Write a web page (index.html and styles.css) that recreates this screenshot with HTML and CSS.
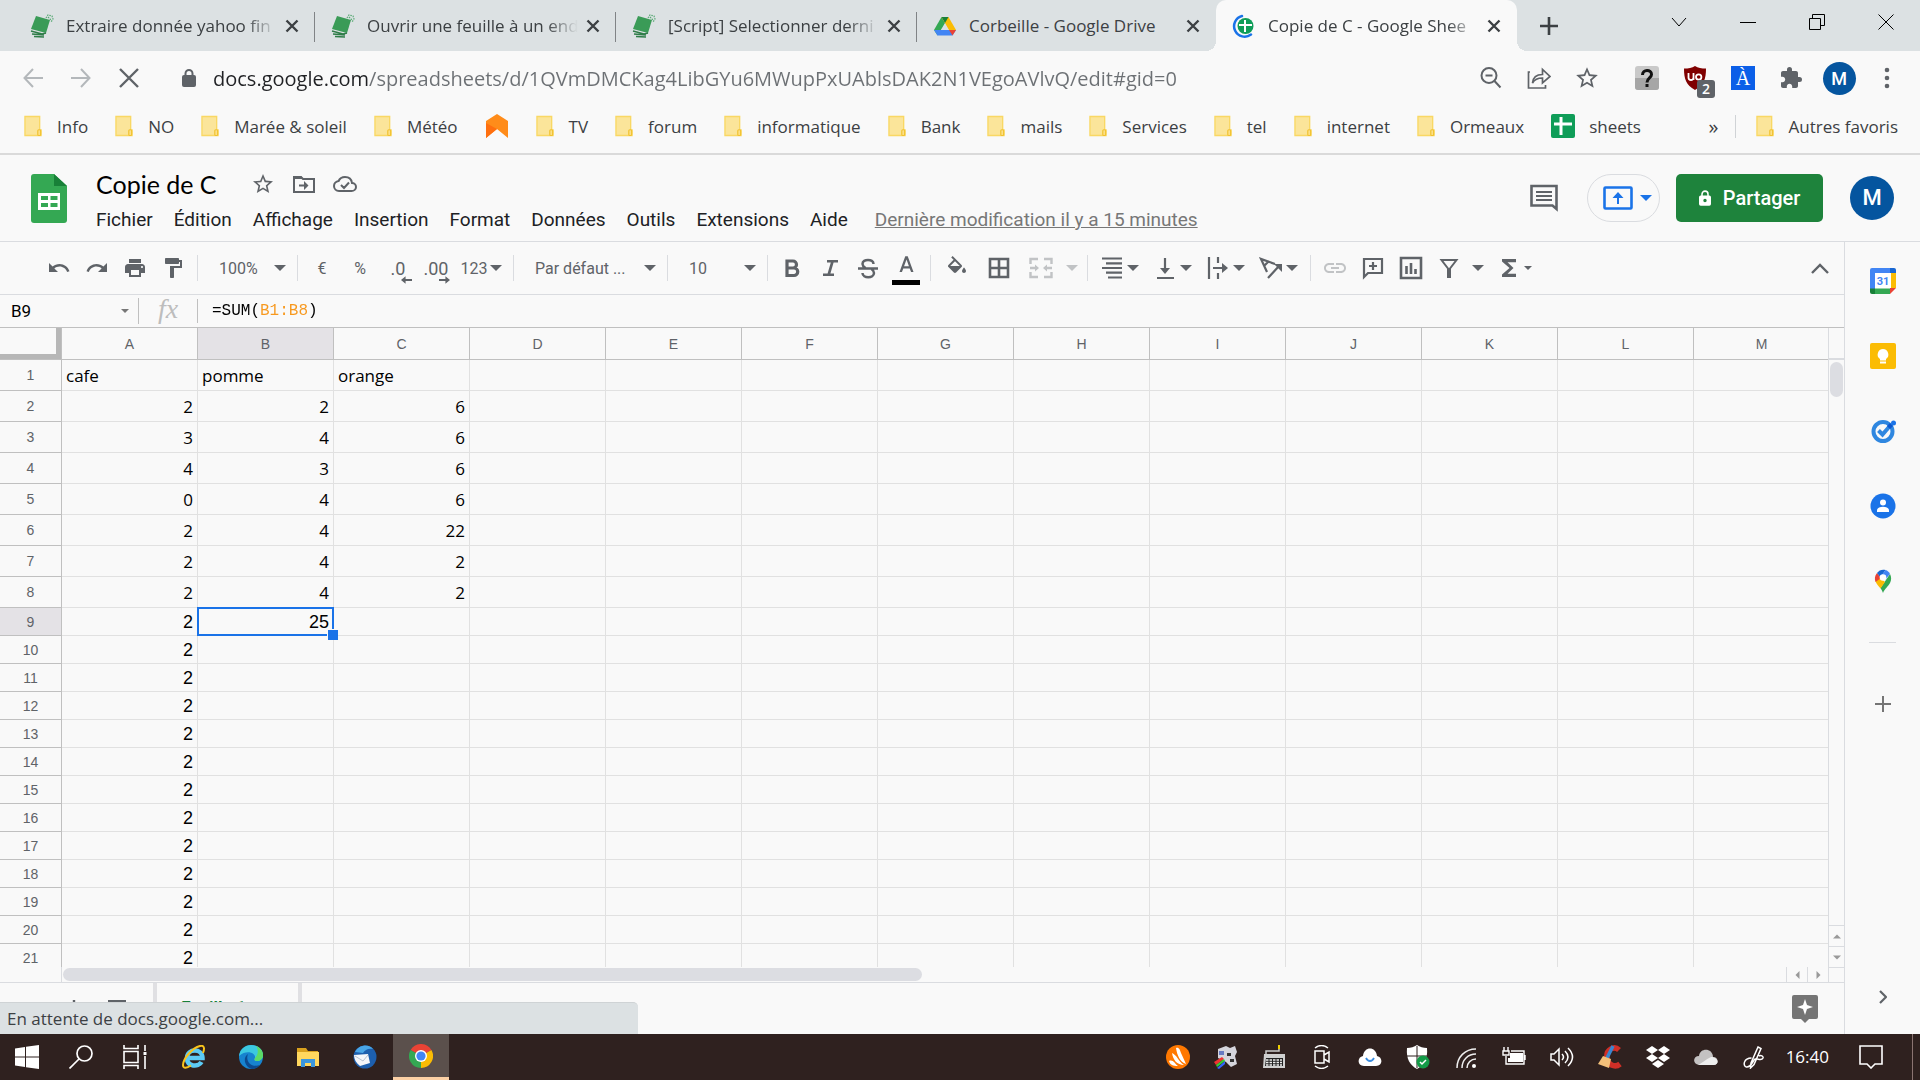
FILE: index.html
```html
<!DOCTYPE html>
<html lang="fr">
<head>
  <meta charset="UTF-8">
  <meta name="viewport" content="width=device-width, initial-scale=1.0">
  <title>Copie de C - Google Sheets</title>
  <link rel="stylesheet" href="styles.css">
</head>
<body>
  <!-- shared icons -->
  <svg class="defs" aria-hidden="true">
    <symbol id="i-book" viewBox="0 0 24 24">
      <path fill="#3a9b57" d="M6 2l14 4-4 13L1 15z"/>
      <path fill="none" stroke="#2f7d49" stroke-width="1.500" d="M1 17l11 3 4-1M2 20l12 1M4 22.500l10 .5"/>
      <path fill="none" stroke="#58a974" stroke-width="1.200" stroke-dasharray="1.500 1" d="M16 4l2-3 4 1 1 3-2 3M18 3l3 3"/>
    </symbol>
    <symbol id="i-close" viewBox="0 0 14 14"><path stroke="#3c4043" stroke-width="2.400" d="M1.500 1.500l11 11M12.500 1.500l-11 11"/></symbol>
    <symbol id="i-folder" viewBox="0 0 20 22">
      <path fill="#fbe59a" stroke="#f9d864" stroke-width="1.400" d="M1 1h15.500v14h1.500v6H1z"/>
      <rect x="14.500" y="15" width="3" height="6" rx="1" fill="#fbe08a" stroke="#f2c230" stroke-width="1.200"/>
    </symbol>
    <symbol id="i-caret" viewBox="0 0 12 6"><path fill="currentColor" d="M0 0h12L6 6z"/></symbol>
    <symbol id="i-star" viewBox="0 0 24 24"><path fill="currentColor" d="M22 9.240l-7.190-.62L12 2 9.190 8.630 2 9.240l5.460 4.730L5.820 21 12 17.270 18.180 21l-1.630-7.030L22 9.240zM12 15.400l-3.760 2.270 1-4.280-3.320-2.880 4.380-.38L12 6.100l1.710 4.040 4.380.38-3.320 2.880 1 4.280L12 15.400z"/></symbol>
  </svg>

  <div class="tab-strip">
    <div class="tab">
      <svg class="favicon"><use href="#i-book"/></svg>
      <span class="tab-title">Extraire donnée yahoo fin</span>
      <button class="tab-close" aria-label="Fermer"><svg><use href="#i-close"/></svg></button>
    </div>
    <div class="tab">
      <svg class="favicon"><use href="#i-book"/></svg>
      <span class="tab-title">Ouvrir une feuille à un end</span>
      <button class="tab-close" aria-label="Fermer"><svg><use href="#i-close"/></svg></button>
    </div>
    <div class="tab">
      <svg class="favicon"><use href="#i-book"/></svg>
      <span class="tab-title">[Script] Selectionner derni</span>
      <button class="tab-close" aria-label="Fermer"><svg><use href="#i-close"/></svg></button>
    </div>
    <div class="tab last">
      <svg class="favicon" viewBox="0 0 24 24">
        <path fill="#34a853" d="M8.500 3L1 16l3.500 5.500L12 9z"/>
        <path fill="#fbbc04" d="M8.500 3h7L23 16h-7z"/>
        <path fill="#4285f4" d="M1 16h22l-3.500 5.500h-15z"/>
        <path fill="#188038" d="M8.500 3h7L12 9z"/>
        <path fill="#ea4335" d="M16 16h7l-3.500 5.500z"/>
        <path fill="#dce1e3" d="M12 10l-3.400 6h6.800z"/>
      </svg>
      <span class="tab-title">Corbeille - Google Drive</span>
      <button class="tab-close" aria-label="Fermer"><svg><use href="#i-close"/></svg></button>
    </div>
    <div class="tab active">
      <svg class="favicon" viewBox="0 0 24 24">
        <path fill="none" stroke="#1a73e8" stroke-width="2.500" stroke-linecap="round" d="M10 2a10.500 10.500 0 1 0 9 18.500"/>
        <circle cx="13.500" cy="12" r="8" fill="#0f9d58"/>
        <path stroke="#fff" stroke-width="2" d="M7 11h13M13 6v12"/>
      </svg>
      <span class="tab-title">Copie de C - Google Shee</span>
      <button class="tab-close" aria-label="Fermer"><svg><use href="#i-close"/></svg></button>
    </div>
    <button class="new-tab" aria-label="Nouvel onglet"><svg viewBox="0 0 18 18"><path stroke="#3c4043" stroke-width="2.600" d="M9 0v18M0 9h18"/></svg></button>
    <div class="window-buttons">
      <button aria-label="Rechercher"><svg viewBox="0 0 16 16"><path d="M1 4l7 8 7-8"/></svg></button>
      <button aria-label="Réduire"><svg viewBox="0 0 16 16"><path d="M0 8.500h16"/></svg></button>
      <button aria-label="Restaurer"><svg viewBox="0 0 16 16"><path d="M.5 4.500h11v11h-11zM3.500 4V.5h12v11H12"/></svg></button>
      <button aria-label="Fermer"><svg viewBox="0 0 16 16"><path d="M.5.5l15 15M15.500.5l-15 15"/></svg></button>
    </div>
  </div>

  <div class="address-bar">
    <button class="nav-btn dim" aria-label="Précédent"><svg viewBox="0 0 20 20"><path d="M20 10H1.500M10 1L1.500 10l8.500 9"/></svg></button>
    <button class="nav-btn dim" aria-label="Suivant"><svg viewBox="0 0 20 20"><path d="M0 10h18.500M10 1l8.500 9-8.500 9"/></svg></button>
    <button class="nav-btn" aria-label="Arrêter"><svg viewBox="0 0 20 20"><path d="M1 1l18 18M19 1L1 19"/></svg></button>
    <svg class="lock" viewBox="0 0 14 18"><rect y="6" width="14" height="12" rx="2" fill="#5f6368"/><path fill="none" stroke="#5f6368" stroke-width="2" d="M3.500 7V4.500a3.500 3.500 0 0 1 7 0V7"/></svg>
    <input class="url" type="text" aria-label="Adresse" value="docs.google.com/spreadsheets/d/1QVmDMCKag4LibGYu6MWupPxUAblsDAK2N1VEgoAVlvQ/edit#gid=0">
    <div class="page-actions">
      <button aria-label="Zoom"><svg viewBox="0 0 24 24"><g fill="none" stroke="#5f6368" stroke-width="2"><circle cx="10" cy="9.500" r="7.500"/><path d="M6.500 9.500h7M15.500 15l6 6.500"/></g></svg></button>
      <button aria-label="Partager"><svg viewBox="0 0 24 24"><path fill="none" stroke="#5f6368" stroke-width="1.700" d="M3 6H1.500v16h17v-3M5.500 17c.5-6 4-8.500 10-8.500V3.500l7.500 7-7.500 6.500v-5c-5 0-8 1.500-10 5z"/></svg></button>
      <button aria-label="Favori"><svg class="big"><use href="#i-star"/></svg></button>
    </div>
    <div class="extensions">
      <button aria-label="Extension"><svg viewBox="0 0 24 24"><rect width="24" height="24" rx="3" fill="#c9c9c9"/><path fill="#a6a6a6" d="M0 12h24v9a3 3 0 0 1-3 3H3a3 3 0 0 1-3-3z"/><path fill="none" stroke="#111" stroke-width="3" d="M7.500 9C7.500 3 16.500 3 16.500 8.500c0 3.500-4.500 3.500-4.500 8M12 18v3"/></svg></button>
      <button aria-label="uBlock Origin"><svg viewBox="0 0 24 24"><path fill="#800000" d="M12 0c3 2 6.500 2.500 11 2.500C23 13 21 19 12 24 3 19 1 13 1 2.500 5.500 2.500 9 2 12 0z"/><path fill="none" stroke="#fff" stroke-width="1.800" d="M5.500 7v4.500a2.500 2.500 0 0 0 5 0V7v7M13 11a2.700 2.700 0 1 0 5.400 0 2.700 2.700 0 1 0-5.400 0z"/></svg><span class="badge">2</span></button>
      <button aria-label="Traduction"><span class="accent-tile">À</span></button>
      <button aria-label="Extensions"><svg viewBox="0 0 24 24"><path fill="#5f6368" d="M20.500 11H19V7c0-1.100-.9-2-2-2h-4V3.500a2.500 2.500 0 0 0-5 0V5H4c-1.100 0-1.990.9-1.990 2v3.800H3.500c1.490 0 2.700 1.210 2.700 2.700s-1.210 2.700-2.700 2.700H2V20c0 1.100.9 2 2 2h3.800v-1.500c0-1.490 1.210-2.700 2.700-2.700s2.700 1.210 2.700 2.700V22H17c1.100 0 2-.9 2-2v-4h1.500a2.500 2.500 0 0 0 0-5z"/></svg></button>
      <button aria-label="Profil"><span class="avatar small">M</span></button>
      <button aria-label="Menu"><svg viewBox="0 0 24 24"><g fill="#5f6368"><circle cx="12" cy="4" r="2.300"/><circle cx="12" cy="12" r="2.300"/><circle cx="12" cy="20" r="2.300"/></g></svg></button>
    </div>
  </div>

  <div class="bookmarks">
    <a href="#"><svg><use href="#i-folder"/></svg>Info</a>
    <a href="#"><svg><use href="#i-folder"/></svg>NO</a>
    <a href="#"><svg><use href="#i-folder"/></svg>Marée &amp; soleil</a>
    <a href="#"><svg><use href="#i-folder"/></svg>Météo</a>
    <a href="#" class="icon-only" aria-label="Accueil"><svg viewBox="0 0 24 24"><path fill="#ff8c1a" d="M12 0l11 7v17l-11-9L1 24V7z"/><path fill="#ff6f0f" d="M1 9l11 6L1 24z"/></svg></a>
    <a href="#"><svg><use href="#i-folder"/></svg>TV</a>
    <a href="#"><svg><use href="#i-folder"/></svg>forum</a>
    <a href="#"><svg><use href="#i-folder"/></svg>informatique</a>
    <a href="#"><svg><use href="#i-folder"/></svg>Bank</a>
    <a href="#"><svg><use href="#i-folder"/></svg>mails</a>
    <a href="#"><svg><use href="#i-folder"/></svg>Services</a>
    <a href="#"><svg><use href="#i-folder"/></svg>tel</a>
    <a href="#"><svg><use href="#i-folder"/></svg>internet</a>
    <a href="#"><svg><use href="#i-folder"/></svg>Ormeaux</a>
    <a href="#" class="sheets-link"><svg viewBox="0 0 24 24"><rect width="24" height="24" rx="2" fill="#0f9d58"/><path stroke="#fff" stroke-width="3" d="M3 10h18M10 3v18"/></svg>sheets</a>
    <button class="more">»</button>
    <a href="#" class="others"><svg><use href="#i-folder"/></svg>Autres favoris</a>
  </div>

  <header class="doc-header">
    <svg class="sheets-logo" viewBox="0 0 36 49">
      <path fill="#34a853" d="M3 0h20l13 12v34a3 3 0 0 1-3 3H3a3 3 0 0 1-3-3V3a3 3 0 0 1 3-3z"/>
      <path fill="#188038" d="M23 0l13 12H23z"/>
      <path fill="#fff" fill-rule="evenodd" d="M7 19h22v17H7zM10 22v4h7v-4zM19.500 22v4h7v-4zM10 29v4h7v-4zM19.500 29v4h7v-4z"/>
    </svg>
    <div class="doc-info">
      <div class="doc-title">
        <h1>Copie de C</h1>
        <button aria-label="Suivre"><svg><use href="#i-star"/></svg></button>
        <button aria-label="Déplacer"><svg viewBox="0 0 24 24"><path fill="none" stroke="currentColor" stroke-width="2" d="M2 5h7l2 2h11v13H2z"/><path fill="currentColor" d="M2 4h7l2 3H2zM12 9l4.500 4.500L12 18v-3.500H7v-2h5z"/></svg></button>
        <button aria-label="État"><svg viewBox="0 0 24 24"><path fill="none" stroke="currentColor" stroke-width="2" d="M19 11C18.500 7 15.600 5 12 5 9 5 6.700 6.500 5.600 9 3 9.300 1 11.500 1 14c0 3 2.300 5 5 5h12.500c2.500 0 4.500-1.700 4.500-4.100 0-2.200-1.800-3.900-4-3.900zM8 13l3 3 5-5.500"/></svg></button>
      </div>
      <nav class="menu">
        <button>Fichier</button>
        <button>Édition</button>
        <button>Affichage</button>
        <button>Insertion</button>
        <button>Format</button>
        <button>Données</button>
        <button>Outils</button>
        <button>Extensions</button>
        <button>Aide</button>
        <a href="#">Dernière modification il y a 15 minutes</a>
      </nav>
    </div>
    <div class="doc-actions">
      <button class="comments" aria-label="Commentaires"><svg viewBox="0 0 28 28"><path fill="none" stroke="#5f6368" stroke-width="2.600" d="M1.500 2h25v23l-4-3.500h-21z"/><path stroke="#5f6368" stroke-width="2" d="M6 8h16M6 12h16M6 16h16"/></svg></button>
      <button class="present" aria-label="Présenter">
        <svg class="present-icon" viewBox="0 0 30 24"><rect x="1.500" y="1.500" width="27" height="21" rx="1" fill="none" stroke="#1a73e8" stroke-width="2.600"/><path fill="#1a73e8" d="M15 6l5.500 6H16v6h-2v-6H9.500z"/></svg>
        <svg class="caret"><use href="#i-caret"/></svg>
      </button>
      <button class="share">
        <svg viewBox="0 0 14 18"><path fill="#fff" fill-rule="evenodd" d="M2 6h10a2 2 0 0 1 2 2v8a2 2 0 0 1-2 2H2a2 2 0 0 1-2-2V8a2 2 0 0 1 2-2zm5 4a2 2 0 1 0 0 4 2 2 0 0 0 0-4z"/><path fill="none" stroke="#fff" stroke-width="1.800" d="M3.500 7V4.500a3.500 3.500 0 0 1 7 0V7"/></svg>
        Partager
      </button>
      <button class="avatar" aria-label="Compte">M</button>
    </div>
  </header>

  <div class="workspace">
    <main class="editor">
      <div class="toolbar">
        <button aria-label="Annuler"><svg viewBox="0 0 24 24"><path fill="currentColor" d="M12.500 8c-2.650 0-5.050.99-6.900 2.600L2 7v9h9l-3.620-3.620c1.390-1.160 3.160-1.880 5.120-1.880 3.540 0 6.550 2.310 7.600 5.500l2.370-.78C21.080 11.030 17.150 8 12.500 8z"/></svg></button>
        <button aria-label="Rétablir"><svg viewBox="0 0 24 24"><path fill="currentColor" d="M18.400 10.600C16.550 8.990 14.150 8 11.500 8c-4.650 0-8.580 3.030-9.960 7.220L3.900 16c1.050-3.190 4.050-5.500 7.600-5.500 1.950 0 3.730.72 5.120 1.880L13 16h9V7l-3.600 3.600z"/></svg></button>
        <button aria-label="Imprimer"><svg viewBox="0 0 24 24"><path fill="currentColor" d="M19 8H5c-1.660 0-3 1.340-3 3v6h4v4h12v-4h4v-6c0-1.660-1.340-3-3-3zm-3 11H8v-5h8v5zm3-7c-.55 0-1-.45-1-1s.45-1 1-1 1 .45 1 1-.45 1-1 1zm-1-9H6v4h12V3z"/></svg></button>
        <button aria-label="Reproduire la mise en forme"><svg viewBox="0 0 24 24"><path fill="currentColor" d="M18 4V3c0-.55-.45-1-1-1H5c-.55 0-1 .45-1 1v4c0 .55.45 1 1 1h12c.55 0 1-.45 1-1V6h1v4H9v11c0 .55.450 1 1 1h2c.55 0 1-.45 1-1v-9h8V4h-3z"/></svg></button>
        <i class="sep"></i>
        <label class="picker zoom"><select aria-label="Zoom"><option>100%</option></select><svg class="caret"><use href="#i-caret"/></svg></label>
        <i class="sep"></i>
        <button>€</button>
        <button>%</button>
        <button class="decimal">.0<svg viewBox="0 0 12 8"><path fill="currentColor" d="M0 4l5-4v3h7v2H5v3z"/></svg></button>
        <button class="decimal">.00<svg viewBox="0 0 12 8"><path fill="currentColor" d="M12 4L7 0v3H0v2h7v3z"/></svg></button>
        <button class="drop">123<svg class="caret"><use href="#i-caret"/></svg></button>
        <i class="sep"></i>
        <label class="picker font"><select aria-label="Police"><option>Par défaut ...</option></select><svg class="caret"><use href="#i-caret"/></svg></label>
        <i class="sep"></i>
        <label class="picker size"><select aria-label="Taille"><option>10</option></select><svg class="caret"><use href="#i-caret"/></svg></label>
        <i class="sep"></i>
        <button aria-label="Gras"><svg viewBox="0 0 24 24"><path fill="none" stroke="currentColor" stroke-width="3.200" d="M7 5h6a3.400 3.400 0 0 1 0 7H7zM7 12h7a3.500 3.500 0 0 1 0 7.500H7z"/></svg></button>
        <button aria-label="Italique"><svg viewBox="0 0 24 24"><path fill="currentColor" d="M9 4v2.500h3.800l-3.200 11H5V20h11v-2.500h-3.600l3.200-11H20V4z"/></svg></button>
        <button aria-label="Barré"><svg viewBox="0 0 24 24"><path fill="none" stroke="currentColor" stroke-width="2.500" d="M2 12.500h20M17.500 8c0-5.500-11-5.500-11 0 0 2 1.500 3 3 4M6.500 17c0 5.500 11.500 5.500 11.500 0 0-2-1-3-2.500-4"/></svg></button>
        <button class="text-color" aria-label="Couleur du texte"><svg viewBox="0 0 24 20"><path fill="currentColor" d="M10.600 0L4 18h2.800l1.500-4h7.400l1.500 4H20L13.400 0zM9.200 11.500L12 3.800l2.800 7.700z"/></svg><i></i></button>
        <i class="sep"></i>
        <button class="wide" aria-label="Remplissage"><svg viewBox="0 0 24 24"><path fill="currentColor" d="M16.560 8.940L7.620 0 6.210 1.410l2.380 2.380-5.150 5.150c-.59.59-.59 1.540 0 2.120l5.500 5.500c.29.29.68.44 1.060.44s.77-.15 1.060-.44l5.500-5.500c.59-.58.59-1.530 0-2.120zM5.210 10L10 5.210 14.790 10H5.210zM19 11.500s-2 2.170-2 3.500c0 1.100.9 2 2 2s2-.9 2-2c0-1.330-2-3.500-2-3.500z"/></svg></button>
        <button class="wide" aria-label="Bordures"><svg viewBox="0 0 24 24"><path fill="none" stroke="currentColor" stroke-width="2.600" d="M3 3h18v18H3zM12 3v18M3 12h18"/></svg></button>
        <button class="wide dim" aria-label="Fusionner"><svg viewBox="0 0 24 24"><path fill="none" stroke="currentColor" stroke-width="2.400" d="M1.500 8V3H9M15 3h7.500v5M1.500 16v5H9M15 21h7.500v-5M1 12h6M23 12h-6"/><path fill="currentColor" d="M6 8.500l4 3.500-4 3.500zM18 8.500L14 12l4 3.500z"/></svg></button>
        <button class="caret-btn dim" aria-label="Type de fusion"><svg class="caret"><use href="#i-caret"/></svg></button>
        <i class="sep"></i>
        <button class="drop" aria-label="Alignement"><svg viewBox="0 0 24 24"><path stroke="currentColor" stroke-width="2.200" d="M2 2.500h20M6 7.300h16M2 12h20M6 16.700h16M8 21.500h14"/></svg><svg class="caret"><use href="#i-caret"/></svg></button>
        <button class="drop" aria-label="Alignement vertical"><svg viewBox="0 0 24 24"><path stroke="currentColor" stroke-width="2.200" d="M12 2v12M4 22h17"/><path fill="currentColor" d="M7 12h10l-5 6z"/></svg><svg class="caret"><use href="#i-caret"/></svg></button>
        <button class="drop" aria-label="Retour à la ligne"><svg viewBox="0 0 24 24"><path stroke="currentColor" stroke-width="2.200" d="M3 1v22M12 1v6M12 17v6M7 12h11"/><path fill="currentColor" d="M16 7l6 5-6 5z"/></svg><svg class="caret"><use href="#i-caret"/></svg></button>
        <button class="drop" aria-label="Rotation"><svg viewBox="0 0 24 24"><path fill="none" stroke="currentColor" stroke-width="2.200" d="M8 16L2 3l14 5M5 10l5-5M9 22L20 10"/><path fill="currentColor" d="M15 8h8v8z"/></svg><svg class="caret"><use href="#i-caret"/></svg></button>
        <i class="sep"></i>
        <button class="dim" aria-label="Lien"><svg viewBox="0 0 24 24"><path fill="currentColor" d="M2.900 12c0-1.710 1.390-3.100 3.100-3.100h5V7H6c-2.760 0-5 2.240-5 5s2.240 5 5 5h5v-1.900H6c-1.710 0-3.100-1.390-3.100-3.100zM8 13h8v-2H8v2zm10-6h-5v1.900h5c1.710 0 3.100 1.390 3.100 3.100s-1.390 3.100-3.100 3.100h-5V17h5c2.760 0 5-2.240 5-5s-2.240-5-5-5z"/></svg></button>
        <button aria-label="Commentaire"><svg viewBox="0 0 24 24"><path fill="none" stroke="currentColor" stroke-width="2.200" d="M3 3h18v14H7l-4 4zM12 6v8M8 10h8"/></svg></button>
        <button aria-label="Graphique"><svg viewBox="0 0 24 24"><path fill="none" stroke="currentColor" stroke-width="2.600" d="M2 2h20v20H2zM7.500 18v-8M12 18V7M16.500 18v-5"/></svg></button>
        <button aria-label="Filtre"><svg viewBox="0 0 24 24"><path fill="none" stroke="currentColor" stroke-width="2" d="M4.500 4h15L13 12.500V21h-2v-8.500z"/></svg></button>
        <button class="caret-btn" aria-label="Vues filtrées"><svg class="caret"><use href="#i-caret"/></svg></button>
        <button class="drop" aria-label="Fonctions"><svg viewBox="0 0 24 24"><path fill="currentColor" d="M19 3H5v2.500l7.500 6.500L5 18.500V21h14v-3.200H10.500l6-5.800-6-5.800H19z"/></svg><svg class="caret tiny"><use href="#i-caret"/></svg></button>
        <button class="collapse" aria-label="Masquer les menus"><svg viewBox="0 0 18 12"><path fill="none" stroke="currentColor" stroke-width="2.400" d="M1 11l8-8 8 8"/></svg></button>
      </div>

      <div class="formula-bar">
        <div class="name-box"><input type="text" aria-label="Zone de nom" value="B9"><svg class="caret tiny"><use href="#i-caret"/></svg></div>
        <span class="fx">fx</span>
        <input class="formula" type="text" aria-label="Formule" value="=SUM(B1:B8)">
      </div>

      <div class="sheet-area">
        <div class="grid">
          <table id="sheet">
            <thead></thead>
            <tbody></tbody>
          </table>
        </div>
        <div class="v-scroll">
          <div class="track"><span class="thumb"></span></div>
          <button aria-label="Haut"><svg viewBox="0 0 12 6"><path fill="#999" d="M6 0l6 6H0z"/></svg></button>
          <button aria-label="Bas"><svg viewBox="0 0 12 6"><path fill="#999" d="M0 0h12L6 6z"/></svg></button>
        </div>
      </div>
      <div class="h-scroll">
        <div class="track"><span class="thumb"></span></div>
        <button aria-label="Gauche"><svg viewBox="0 0 6 12"><path fill="#999" d="M6 0v12L0 6z"/></svg></button>
        <button aria-label="Droite"><svg viewBox="0 0 6 12"><path fill="#999" d="M0 0v12l6-6z"/></svg></button>
        <i></i>
      </div>
      <div class="sheet-tabs">
        <button aria-label="Ajouter"><svg viewBox="0 0 18 18"><path stroke="currentColor" stroke-width="2.400" d="M9 0v18M0 9h18"/></svg></button>
        <button class="all-sheets" aria-label="Toutes les feuilles"><svg viewBox="0 0 18 18"><path stroke="currentColor" stroke-width="2.400" d="M0 1.200h18M0 7h18M0 13h18"/></svg></button>
        <button class="sheet-tab">Feuille 1</button>
        <button class="explore" aria-label="Explorer"><svg viewBox="0 0 26 28"><path fill="#757575" d="M2 0h22a2 2 0 0 1 2 2v20a2 2 0 0 1-2 2h-7l-4 4-4-4H2a2 2 0 0 1-2-2V2a2 2 0 0 1 2-2z"/><path fill="#fff" d="M13 4l2 6 6 2-6 2-2 6-2-6-6-2 6-2z"/></svg></button>
      </div>
    </main>

    <aside class="side-panel">
      <button aria-label="Agenda"><svg viewBox="0 0 26 26"><path fill="#fff" d="M4 4h18v18H4z"/><path fill="#4285f4" d="M2 0h19v5H5v16H0V2a2 2 0 0 1 2-2z"/><path fill="#1967d2" d="M20 0h4a2 2 0 0 1 2 2v3h-6z"/><path fill="#fbbc04" d="M21 5h5v15h-5z"/><path fill="#34a853" d="M5 20.500h15V26H5z"/><path fill="#188038" d="M0 20.500h5V26H2a2 2 0 0 1-2-2z"/><path fill="#ea4335" d="M20 20h6l-6 6z"/><text class="cal-day" x="13" y="17">31</text></svg></button>
      <button aria-label="Keep"><svg viewBox="0 0 26 26"><rect width="26" height="26" rx="2" fill="#fbbc04"/><path fill="#fff" d="M13 6a5.500 5.500 0 0 0-3 10v1.500h6V16a5.500 5.500 0 0 0-3-10zM10 18.500h6V20.500h-6z"/></svg></button>
      <button aria-label="Tasks"><svg viewBox="0 0 26 26"><circle cx="13" cy="13.500" r="9.500" fill="none" stroke="#2f87e0" stroke-width="4"/><path fill="none" stroke="#2f87e0" stroke-width="4" d="M8.500 12.500l4 4L19 9"/><path stroke="#0b57d0" stroke-width="4.500" d="M18.500 9.500l3-3"/><circle cx="23.500" cy="5" r="2.500" fill="#1a73e8"/></svg></button>
      <button aria-label="Contacts"><svg viewBox="0 0 26 26"><circle cx="13" cy="13" r="12.500" fill="#1a73e8"/><circle cx="13" cy="9.500" r="3" fill="#fff"/><path fill="#fff" d="M7 19v-1.500c0-5 12-5 12 0V19z"/></svg></button>
      <button aria-label="Maps"><svg viewBox="0 0 26 26"><path fill="#34a853" d="M20 6c1.500 3 1.500 6 0 9-2 4-5 5-7 10-.8-2-1.500-3.500-2.500-5z"/><path fill="#fbbc04" d="M5.500 13.500L10 9l5 5-4.500 6.500C8.500 18 6.500 16 5.500 13.500z"/><path fill="#ea4335" d="M7 5l4 5-5.500 4C4.500 11 4.500 8 7 5z"/><path fill="#1967d2" d="M7 5c2-3 5.500-4 8.500-3l-5 7.500z"/><path fill="#4285f4" d="M15.500 2c2 .6 3.500 2 4.500 4l-5 6-3-5z"/><circle cx="13" cy="9.500" r="3.300" fill="#fff"/></svg></button>
      <hr>
      <button class="add" aria-label="Modules complémentaires"><svg viewBox="0 0 16 16"><path stroke="#757575" stroke-width="2" d="M8 0v16M0 8h16"/></svg></button>
      <button class="hide-panel" aria-label="Masquer le panneau"><svg viewBox="0 0 8 14"><path fill="none" stroke="#5f6368" stroke-width="2.200" d="M1 1l6 6-6 6"/></svg></button>
    </aside>
    <div class="status-bubble">En attente de docs.google.com...</div>
  </div>

  <footer class="taskbar">
    <button aria-label="Démarrer"><svg viewBox="0 0 24 24"><path fill="#fff" d="M0 3.500L10 2v9.500H0zM11 1.800L24 0v11.500H11zM0 12.500h10V22L0 20.500zM11 12.500h13V24l-13-1.800z"/></svg></button>
    <button aria-label="Rechercher"><svg viewBox="0 0 24 24"><g fill="none" stroke="#fff" stroke-width="1.700"><circle cx="15.500" cy="8.500" r="7.500"/><path d="M10 14L.5 23.500"/></g></svg></button>
    <button aria-label="Applications actives"><svg viewBox="0 0 24 24"><path fill="none" stroke="#fff" stroke-width="1.600" d="M1 0v3.500h14V0M1 24v-3.500h14V24M1 6.500h14v11H1zM22 0v6M22 11v13"/><path fill="#fff" d="M20.500 7h3v3h-3z"/></svg></button>
    <button class="app" aria-label="Internet Explorer"><svg viewBox="0 0 24 24"><path fill="none" stroke="#5ccbf5" stroke-width="4.500" d="M5 13h15.500C20.500 3 5 3 5 13c0 9 11.500 9.500 14.500 4"/><path fill="none" stroke="#f8c31c" stroke-width="2" d="M21 8c2-5 1-8-3-7C10 3 1 14 1 20c0 4 4 3 8 .5"/></svg></button>
    <button class="app" aria-label="Edge"><svg viewBox="0 0 24 24"><circle cx="12" cy="12" r="12" fill="#1783cf"/><path fill="#3cc8e0" d="M0 11C1 4 6 0 12 0c7 0 12 4.500 12 10 0 4-3 6-6 6-2.500 0-3-1.500-2-3C17 8 8 4 0 11z"/><path fill="#5cdb66" d="M17 1c4.500 2 7 5 7 9 0 4-3 6-6 6-2.500 0-3-1.500-2-3 3-3 4-8 1-12z"/><path fill="#0c4a8f" d="M9 9c-3 7 3 14 12 11-2 2.500-5 4-8 4C6 22 3 13 9 9z"/></svg></button>
    <button class="app" aria-label="Explorateur"><svg viewBox="0 0 24 24"><path fill="#d9a11e" d="M1 3h9l2 3h10v4H1z"/><path fill="#ffd75e" d="M1 7h22v14H1z"/><path fill="#3a96dd" d="M5 22v-8h14v8h-4v-4H9v4z"/></svg></button>
    <button class="app" aria-label="Thunderbird"><svg viewBox="0 0 24 24"><circle cx="12" cy="12" r="11.500" fill="#1d5fae"/><path fill="#49a5e6" d="M2 7C6-1 17-1 20 4c-5-1-8 1-10 4z"/><path fill="#f4f6fa" d="M1 10l14-1 2 9-10 3c-4-3-6-7-6-11z"/><path fill="none" stroke="#b8c2d2" d="M2 11l8 5 5-6"/></svg></button>
    <button class="app current" aria-label="Chrome"><svg viewBox="0 0 24 24"><path fill="#ea4335" d="M12 12L1.600 6A12 12 0 0 1 22.400 6z"/><path fill="#fbbc04" d="M12 12l10.400-6A12 12 0 0 1 12 24z"/><path fill="#34a853" d="M12 12v12A12 12 0 0 1 1.600 6z"/><path fill="#ea4335" d="M12 6h10.400L12 8z"/><circle cx="12" cy="12" r="6" fill="#fff"/><circle cx="12" cy="12" r="4.600" fill="#4285f4"/></svg></button>
    <div class="tray">
      <button aria-label="Avast"><svg viewBox="0 0 24 24"><circle cx="12" cy="12" r="12" fill="#ff7800"/><path fill="#fff" d="M10 3c3-1 4 2 5 5l5 11c-6-2-9-9-10-16zM6 8c5 2 6 8 12 12-7 0-11-5-12-12zM3 16c4-2 6 3 9 5-5 0-8-1-9-5z"/></svg></button>
      <button aria-label="Scanner"><svg viewBox="0 0 24 24"><path fill="#d5d5dc" d="M4 4l8-3 4 2 5-2 2 6-2 4 2 8-6 3-5-5-8-4z"/><path fill="#333" d="M13 8h4v3h-4zM16 14h4v3h-4z"/><path fill="#e33" d="M0 17l8-5 2 2-8 6z"/><path fill="#3c3" d="M2 20l8-6 1 2-8 6z"/><path fill="#36f" d="M3 23l8-7v3l-6 5z"/><path fill="#667ac2" d="M5 6h5v4H5z"/></svg></button>
      <button aria-label="Clavier"><svg viewBox="0 0 24 24"><path fill="#d0d0d0" d="M2 9h21v14H1z"/><path fill="#222" d="M4 13h17v8H3z"/><path stroke="#eee" stroke-width="1.300" stroke-dasharray="2.500 1" d="M4 15h16M4 17.500h16M4 20h16"/><path fill="none" stroke="#ccc" stroke-width="1.500" d="M4 9V6h13V3"/><path stroke="#f0d000" stroke-width="2" d="M17 0v4"/></svg></button>
      <button aria-label="Caméra"><svg viewBox="0 0 24 24"><path fill="none" stroke="#fff" stroke-width="1.500" d="M5 6h9v12H5zM14 10l5-3v10l-5-3M5 3c4-3 9-3 13 0M5 21c4 3 9 3 13 0"/></svg></button>
      <button aria-label="Cloud"><svg viewBox="0 0 24 24"><path fill="#fff" d="M6 21c-7 0-7-9-1-10 1-10 13-10 14 0 6 1 6 10-1 10z"/><path fill="none" stroke="#3b8de0" stroke-width="1.800" d="M8 13c2 4 6 4 8 0"/></svg></button>
      <button aria-label="Sécurité"><svg viewBox="0 0 24 24"><path fill="#fff" d="M11 0c3 2 6 3 10 3 1 11-3 17-10 21C4 20 0 14 1 3c4 0 7-1 10-3z"/><path stroke="#2d1f1d" d="M11 1v22M1 11h20"/><circle cx="17" cy="17" r="6.500" fill="#149b48"/><path fill="none" stroke="#fff" stroke-width="1.500" d="M14 17l2 2 4-4"/></svg></button>
      <button aria-label="Wi-Fi"><svg viewBox="0 0 24 24"><g fill="none" stroke="#eee" stroke-width="1.500"><path d="M3 23C3 12 11 4 22 4M8 23c0-8 6-14 14-14M13 23c0-5 4-9 9-9"/></g><circle cx="20" cy="21" r="2" fill="#fff"/></svg></button>
      <button aria-label="Batterie"><svg viewBox="0 0 24 24"><path fill="#fff" d="M8 8h13v9H6v-4h2z"/><path fill="none" stroke="#fff" stroke-width="1.400" d="M9 6h13v13H4v-8M2 2v4M6 2v4M1 6h6v4H1zM23 10v5"/></svg></button>
      <button aria-label="Volume"><svg viewBox="0 0 24 24"><path fill="none" stroke="#fff" stroke-width="1.500" d="M1 9h3l5-5v16l-5-5H1zM12 9c2 2 2 4 0 6M15 6c4 4 4 8 0 12M18 3c6 6 6 12 0 18"/></svg></button>
      <button aria-label="CCleaner"><svg viewBox="0 0 24 24"><path fill="none" stroke="#cf2f27" stroke-width="5.500" d="M21 5c-5-5-13 0-12 7 0 8 8 11 13 7"/><path stroke="#3987d0" stroke-width="3.500" d="M15 1L9 13"/><path fill="#f3c07a" d="M5 11l8 3-2 9-11-4z"/></svg></button>
      <button aria-label="Dropbox"><svg viewBox="0 0 24 24"><path fill="#fff" d="M6 1l6 4-6 4-6-4zM18 1l6 4-6 4-6-4zM6 9l6 4-6 4-6-4zM18 9l6 4-6 4-6-4zM12 15l6 4-6 4-6-4z"/></svg></button>
      <button aria-label="OneDrive"><svg viewBox="0 0 24 24"><path fill="#c4c2c2" d="M5 20c-7-1-6-9 0-9 1-9 14-8 14 1 6 0 6 8 1 8z"/><path fill="#eee" d="M4 20c3-1 8-6 13-8 7 0 9 7 3 8z"/></svg></button>
      <button aria-label="Stylet"><svg viewBox="0 0 24 24"><path fill="none" stroke="#fff" stroke-width="1.500" d="M16 2l3 1.500-7 16L8.500 23l.5-5zM9.500 13c-8 0-9 8-5 9 4 .5 6-5 8-7.500S19 17 21 13c.5-2-2-3-4-2"/></svg></button>
    </div>
    <time class="clock">16:40</time>
    <button class="notif" aria-label="Notifications"><svg viewBox="0 0 24 24"><path fill="none" stroke="#fff" stroke-width="1.600" d="M1 1h22v18h-7l-4 4-4-4H1z"/></svg></button>
    <i class="show-desktop"></i>
  </footer>

  <script src="script.js"></script>
</body>
</html>
```
FILE: script.js
```js
const columns = 'ABCDEFGHIJKLM'.split('');
const values = [
  ['cafe', 'pomme', 'orange'],
  [2, 2, 6],
  [3, 4, 6],
  [4, 3, 6],
  [0, 4, 6],
  [2, 4, 22],
  [2, 4, 2],
  [2, 4, 2],
  [2, 25]
];
const rowCount = 21;
const selected = { row: 9, col: 'B' };

const table = document.getElementById('sheet');

let head = '<tr><th class="corner"><span></span></th>';
columns.forEach(function (name) {
  head += '<th scope="col"' + (name === selected.col ? ' class="current"' : '') + '>' + name + '</th>';
});
table.tHead.innerHTML = head + '</tr>';

let body = '';
for (let r = 1; r <= rowCount; r++) {
  const cells = values[r - 1] || [2];
  const isCurrent = r === selected.row;
  body += '<tr class="' + (r < 9 ? 'tall' : 'short') + '">';
  body += '<th scope="row"' + (isCurrent ? ' class="current"' : '') + '>' + r + '</th>';
  columns.forEach(function (name, i) {
    const value = cells[i] === undefined ? '' : cells[i];
    let cls = typeof value === 'number' ? 'num' : '';
    if (isCurrent && name === selected.col) cls += ' selected';
    body += '<td' + (cls ? ' class="' + cls + '"' : '') + '>' + value + '</td>';
  });
  body += '</tr>';
}
table.tBodies[0].innerHTML = body;
```
FILE: styles.css
```css
* {
    margin: 0;
    padding: 0;
    box-sizing: border-box;
}

body {
    display: flex;
    flex-direction: column;
    height: 100vh;
    overflow: hidden;
    background: #f9f9f9;
    color: #3c4043;
    font-family: "Open Sans", "Noto Sans", sans-serif;
    font-size: 17px;
}

button, input, select {
    border: none;
    outline: none;
    background: none;
    font: inherit;
    color: inherit;
}

button {
    display: flex;
    align-items: center;
    justify-content: center;
    flex-shrink: 0;
    cursor: pointer;
}

a {
    color: inherit;
    text-decoration: none;
}

svg {
    display: block;
    flex-shrink: 0;
    width: 24px;
    height: 24px;
}

.defs {
    position: absolute;
    width: 0;
    height: 0;
}

svg.caret {
    width: 12px;
    height: 6px;
}

svg.tiny {
    width: 8px;
    height: 4px;
}

/* browser tabs */
.tab-strip {
    display: flex;
    height: 51px;
    padding-left: 14px;
    background: #dce1e3;
}

.tab {
    position: relative;
    display: flex;
    align-items: center;
    flex: 0 1 301px;
    min-width: 0;
    padding: 0 16px;
}

.tab:not(.last):not(.active)::after {
    content: "";
    position: absolute;
    right: 0;
    top: 12px;
    width: 1px;
    height: 30px;
    background: #808386;
}

.tab-title {
    flex: 1;
    min-width: 0;
    margin: 0 8px 0 12px;
    overflow: hidden;
    white-space: nowrap;
    -webkit-mask-image: linear-gradient(to right, #000 85%, transparent);
    mask-image: linear-gradient(to right, #000 85%, transparent);
}

.last .tab-title {
    -webkit-mask-image: none;
    mask-image: none;
}

.tab-close svg {
    width: 14px;
    height: 14px;
}

.tab.last {
    flex-basis: 299px;
}

.tab.active {
    background: #f9f9f9;
    border-radius: 10px 10px 0 0;
}

.tab.active::before, .tab.active::after {
    content: "";
    position: absolute;
    bottom: 0;
    width: 10px;
    height: 10px;
}

.tab.active::before {
    left: -10px;
    background: radial-gradient(circle at 0 0, #dce1e3 10px, #f9f9f9 10px);
}

.tab.active::after {
    right: -10px;
    background: radial-gradient(circle at 100% 0, #dce1e3 10px, #f9f9f9 10px);
}

.new-tab {
    width: 64px;
}

.new-tab svg {
    width: 18px;
    height: 18px;
}

.window-buttons {
    display: flex;
    height: 44px;
    margin-left: auto;
}

.window-buttons button {
    width: 69px;
}

.window-buttons svg {
    width: 16px;
    height: 16px;
    fill: none;
    stroke: #000;
}

/* address bar */
.address-bar {
    display: flex;
    align-items: center;
    height: 54px;
    padding: 0 9px 0 9px;
}

.nav-btn {
    width: 48px;
}

.nav-btn svg {
    width: 20px;
    height: 20px;
    fill: none;
    stroke: #5f6368;
    stroke-width: 2.4;
}

.nav-btn.dim svg {
    stroke: #b4b8bb;
    stroke-width: 2;
}

.lock {
    width: 14px;
    height: 18px;
    margin: 0 17px 0 29px;
}

.url {
    flex: 1;
    min-width: 0;
    height: 36px;
    font-size: 20px;
    color: transparent;
    background: linear-gradient(to right, #202124 156px, #6c7074 156px);
    -webkit-background-clip: text;
    background-clip: text;
}

.page-actions, .extensions {
    display: flex;
    color: #5f6368;
}

.page-actions {
    margin-right: 12px;
}

.page-actions button, .extensions button {
    position: relative;
    width: 48px;
    height: 40px;
}

svg.big {
    width: 26px;
    height: 26px;
}

.badge {
    position: absolute;
    right: 4px;
    bottom: 0;
    width: 18px;
    border-radius: 3px;
    background: #5f6368;
    color: #fff;
    font-size: 14px;
    font-weight: 600;
    line-height: 18px;
}

.accent-tile {
    width: 24px;
    background: #0b5fe8;
    color: #fff;
    font: 20px/24px "Liberation Serif", serif;
}

.avatar {
    width: 44px;
    height: 44px;
    border-radius: 50%;
    background: #05559f;
    color: #fff;
    font: 500 22px/44px Roboto, sans-serif;
    text-align: center;
}

.avatar.small {
    width: 33px;
    height: 33px;
    font-size: 18px;
    line-height: 33px;
}

/* bookmarks */
.bookmarks {
    display: flex;
    align-items: center;
    gap: 27px;
    height: 50px;
    padding: 0 22px 6px 24px;
    border-bottom: 2px solid #dadada;
    white-space: nowrap;
}

.bookmarks a {
    display: flex;
    align-items: center;
    gap: 14px;
}

.bookmarks svg {
    width: 19px;
    height: 22px;
}

.bookmarks .icon-only svg, .bookmarks .sheets-link svg {
    width: 24px;
    height: 24px;
}

.bookmarks .more {
    margin-left: auto;
    font-size: 20px;
}

.bookmarks .others {
    padding-left: 20px;
    margin-left: -11px;
    border-left: 1px solid #d0d3d6;
}

/* document header */
.doc-header {
    display: flex;
    align-items: center;
    height: 87px;
    padding: 0 26px 0 31px;
    border-bottom: 1px solid #dadce0;
    color: #202124;
}

.sheets-logo {
    width: 36px;
    height: 49px;
}

.doc-info {
    padding-top: 7px;
    margin-left: 29px;
}

.doc-title {
    display: flex;
    align-items: center;
    height: 36px;
    gap: 17px;
    color: #5f6368;
}

.doc-title h1 {
    margin-right: 17px;
    color: #000;
    font: 25px Lato, sans-serif;
}

.menu {
    display: flex;
    align-items: center;
    gap: 21px;
    height: 36px;
    font: 19px Roboto, sans-serif;
    white-space: nowrap;
}

.menu a {
    margin-left: 6px;
    color: #777;
    text-decoration: underline;
}

.doc-actions {
    display: flex;
    align-items: center;
    margin-left: auto;
}

.comments svg {
    width: 28px;
    height: 28px;
}

.present {
    gap: 7px;
    width: 73px;
    height: 48px;
    padding-left: 8px;
    margin: 0 16px 0 29px;
    border: 1px solid #dadce0;
    border-radius: 24px;
    color: #1a73e8;
}

.present-icon {
    width: 30px;
}

.share {
    gap: 12px;
    width: 147px;
    height: 48px;
    margin-right: 27px;
    border-radius: 5px;
    background: #1e833c;
    color: #fff;
    font: 500 20px Roboto, sans-serif;
}

.share svg {
    width: 12px;
    height: 16px;
}

.workspace {
    position: relative;
    display: flex;
    flex: 1;
    min-height: 0;
}

.editor {
    display: flex;
    flex-direction: column;
    flex: 1;
    min-width: 0;
}

/* toolbar */
.toolbar {
    display: flex;
    align-items: center;
    height: 53px;
    padding: 0 5px 0 40px;
    border-bottom: 1px solid #dadce0;
    color: #5f6368;
    font: 16px Roboto, sans-serif;
}

.toolbar button {
    width: 38px;
    height: 40px;
}

.toolbar .wide {
    width: 42px;
}

.toolbar .drop {
    width: 53px;
    gap: 3px;
}

.toolbar .caret-btn {
    width: 20px;
}

.toolbar .dim {
    color: #c1c3c5;
}

.sep {
    flex-shrink: 0;
    width: 1px;
    height: 26px;
    margin: 0 5px;
    background: #dadce0;
}

.picker {
    display: flex;
    align-items: center;
    flex-shrink: 0;
    height: 36px;
    padding: 0 6px 0 16px;
}

.picker select {
    flex: 1;
    min-width: 0;
    appearance: none;
}

.zoom, .size {
    width: 89px;
}

.font {
    width: 143px;
}

.toolbar .decimal {
    position: relative;
    font-size: 18px;
}

.decimal svg {
    position: absolute;
    right: 5px;
    bottom: 4px;
    width: 11px;
    height: 8px;
}

.toolbar .text-color {
    flex-direction: column;
    gap: 6px;
    padding-top: 4px;
}

.text-color svg {
    width: 21px;
    height: 18px;
}

.text-color i {
    width: 28px;
    height: 5px;
    background: #000;
}

.toolbar .collapse {
    margin-left: auto;
}

.collapse svg {
    width: 18px;
    height: 12px;
}

/* formula bar */
.formula-bar {
    display: flex;
    align-items: center;
    height: 33px;
    border-bottom: 1px solid #c0c0c0;
    color: #000;
}

.name-box {
    display: flex;
    align-items: center;
    width: 139px;
    height: 26px;
    padding: 0 9px 0 11px;
    border-right: 1px solid #c0c0c0;
    color: #777;
}

.name-box input {
    flex: 1;
    min-width: 0;
    color: #000;
    font: 17px Roboto, sans-serif;
}

.fx {
    width: 59px;
    height: 24px;
    border-right: 1px solid #c0c0c0;
    color: #bdbdbd;
    font: italic 28px/20px "Liberation Serif", serif;
    text-align: center;
}

.formula {
    flex: 1;
    margin-left: 14px;
    font: 16px "Liberation Mono", monospace;
    color: transparent;
    background: linear-gradient(to right, #000 5ch, #f7981d 5ch, #f7981d 10ch, #000 10ch);
    -webkit-background-clip: text;
    background-clip: text;
}

/* grid */
.sheet-area {
    display: flex;
    flex: 1;
    min-height: 0;
}

.grid {
    flex: 1;
    min-width: 0;
    overflow: hidden;
}

#sheet {
    width: 1830px;
    border-spacing: 0;
    table-layout: fixed;
    color: #000;
}

#sheet th {
    width: 136px;
    border-right: 1px solid #c0c0c0;
    border-bottom: 1px solid #c0c0c0;
    color: #5f6368;
    font: 14px "Liberation Sans", sans-serif;
}

#sheet thead th {
    height: 32px;
}

#sheet th:first-child {
    width: 62px;
}

#sheet th.current {
    background: #e4e2e6;
}

#sheet .corner span {
    display: block;
    height: 31px;
    border-right: 5px solid #b7b7b7;
    border-bottom: 5px solid #b7b7b7;
}

#sheet td {
    padding: 0 4px;
    border-right: 1px solid #e1e1e1;
    border-bottom: 1px solid #e1e1e1;
    line-height: 20px;
    white-space: nowrap;
}

#sheet .tall td {
    height: 31px;
    padding-top: 1px;
    font-size: 17px;
}

.short td {
    height: 28px;
    font: 18px "Liberation Sans", sans-serif;
}

#sheet .num {
    text-align: right;
}

#sheet .selected {
    position: relative;
}

.selected::before {
    content: "";
    position: absolute;
    inset: -1px;
    border: 2px solid #1a73e8;
}

.selected::after {
    content: "";
    position: absolute;
    right: -5px;
    bottom: -5px;
    width: 10px;
    height: 10px;
    border: 1px solid #f9f9f9;
    border-width: 1px 0 0 1px;
    background: #1a73e8;
}

.v-scroll {
    display: flex;
    flex-direction: column;
    width: 16px;
    border-left: 1px solid #dadce0;
}

.v-scroll .track {
    flex: 1;
    margin-top: 30px;
    padding: 2px 1px;
    border-top: 2px solid #dadce0;
}

.v-scroll .thumb {
    display: block;
    height: 35px;
    border-radius: 7px;
    background: #dcdde2;
}

.v-scroll button {
    height: 21px;
    border-top: 1px solid #dadce0;
}

.v-scroll svg {
    width: 8px;
    height: 5px;
}

.h-scroll {
    display: flex;
    height: 16px;
    border-bottom: 1px solid #dadce0;
}

.h-scroll .track {
    flex: 1;
    margin-left: 61px;
    padding: 1px;
    border-left: 1px solid #dadce0;
}

.h-scroll .thumb {
    display: block;
    width: 50%;
    max-width: 859px;
    height: 13px;
    border-radius: 7px;
    background: #dcdde2;
}

.h-scroll button {
    width: 21px;
    border-left: 1px solid #dadce0;
}

.h-scroll svg {
    width: 5px;
    height: 8px;
}

.h-scroll i {
    width: 16px;
    border-top: 1px solid #dadce0;
    border-left: 1px solid #dadce0;
}

.sheet-tabs {
    display: flex;
    align-items: center;
    height: 51px;
    padding: 0 26px 0 65px;
    color: #5f6368;
}

.sheet-tabs svg {
    width: 18px;
    height: 18px;
}

.all-sheets {
    margin: 0 27px 0 25px;
}

.sheet-tab {
    width: 149px;
    height: 51px;
    padding: 0 28px 4px 0;
    border: solid #e0e0e3;
    border-width: 0 4px;
    color: #188038;
    font: 700 17px Roboto, sans-serif;
}

.sheet-tabs .explore {
    margin-left: auto;
}

.explore svg {
    width: 26px;
    height: 28px;
}

/* side panel */
.side-panel {
    display: flex;
    flex-direction: column;
    align-items: center;
    width: 76px;
    padding-top: 1px;
    border-left: 1px solid #dadce0;
}

.side-panel button {
    width: 48px;
    height: 75px;
}

.side-panel svg {
    width: 26px;
    height: 26px;
}

.cal-day {
    fill: #4285f4;
    font: 700 11px Roboto, sans-serif;
    text-anchor: middle;
}

.side-panel hr {
    width: 27px;
    margin-top: 24px;
    border: none;
    border-top: 1px solid #dadce0;
}

.side-panel .add {
    margin-top: 23px;
}

.add svg {
    width: 16px;
    height: 16px;
}

.side-panel .hide-panel {
    margin-top: auto;
}

.hide-panel svg {
    width: 8px;
    height: 14px;
}

.status-bubble {
    position: absolute;
    left: 0;
    bottom: 0;
    width: 638px;
    height: 32px;
    padding-left: 7px;
    border-top: 1px solid #cfd3d5;
    border-radius: 0 5px 0 0;
    background: #dce1e3;
    line-height: 32px;
}

/* taskbar */
.taskbar {
    display: flex;
    flex-shrink: 0;
    height: 46px;
    background: #2f211f;
}

.taskbar > button {
    width: 54px;
}

.taskbar .app {
    width: 57px;
}

.taskbar .app:nth-of-type(4) {
    margin-left: 3px;
}

.taskbar .current {
    width: 56px;
    border-bottom: 3px solid #fbd0a5;
    background: #5b504c;
}

.tray {
    display: flex;
    margin-left: auto;
}

.tray button {
    width: 48px;
}

.clock {
    margin-left: 8px;
    color: #fff;
    line-height: 46px;
}

.taskbar .notif {
    width: 83px;
}

.show-desktop {
    width: 8px;
    border-left: 1px solid #8b7472;
}
```
